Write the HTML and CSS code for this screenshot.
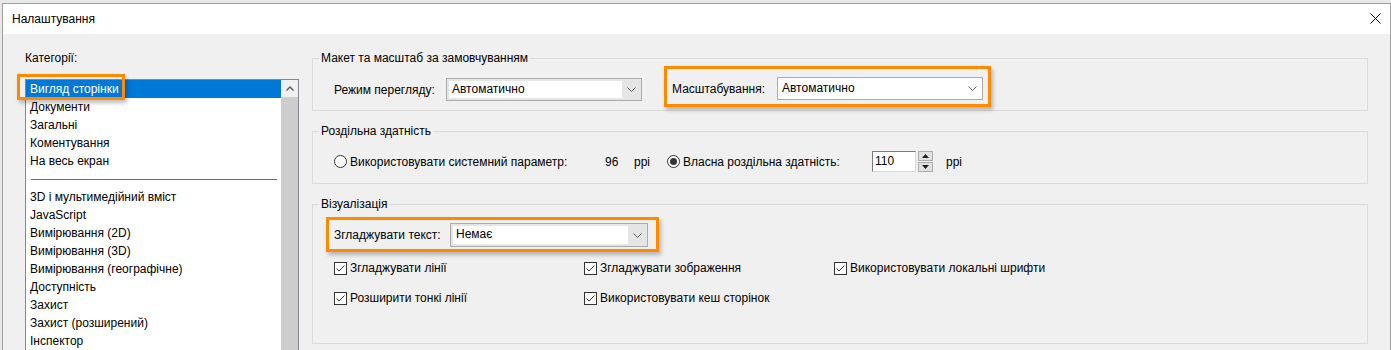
FILE: index.html
```html
<!DOCTYPE html>
<html lang="uk">
<head>
  <meta charset="UTF-8">
  <title>Налаштування</title>
  <link rel="stylesheet" href="styles.css">
</head>
<body>
  <div class="window">
    <div class="titlebar">
      <span class="title">Налаштування</span>
      <svg class="close" viewBox="0 0 11 11" fill="none" stroke="#000" stroke-width="1">
        <path d="M0.5 0.5L10.5 10.5M10.5 0.5L0.5 10.5"/>
      </svg>
    </div>

    <div class="dialog">
      <!-- Categories list -->
      <aside class="categories">
        <div class="cat-label">Категорії:</div>
        <div class="listbox">
          <ul class="list">
            <li class="selected">Вигляд сторінки</li>
            <li>Документи</li>
            <li>Загальні</li>
            <li>Коментування</li>
            <li>На весь екран</li>
            <li class="sep"></li>
            <li>3D і мультимедійний вміст</li>
            <li>JavaScript</li>
            <li>Вимірювання (2D)</li>
            <li>Вимірювання (3D)</li>
            <li>Вимірювання (географічне)</li>
            <li>Доступність</li>
            <li>Захист</li>
            <li>Захист (розширений)</li>
            <li>Інспектор</li>
          </ul>
          <div class="scrollbar">
            <div class="scroll-btn">
              <svg viewBox="0 0 8 5" fill="none" stroke="#606060" stroke-width="1.5">
                <path d="M0.5 4.5L4 1L7.5 4.5"/>
              </svg>
            </div>
            <div class="scroll-thumb"></div>
          </div>
          <div class="mark-item"></div>
        </div>
      </aside>

      <!-- Settings groups -->
      <main class="settings">
        <fieldset class="group group-layout">
          <legend>Макет та масштаб за замовчуванням</legend>
          <div class="row">
            <div class="field field-view">
              <span class="label label-view">Режим перегляду:</span>
              <div class="combo editable combo-view">
                <span class="value">Автоматично</span>
                <span class="arrow">
                  <svg viewBox="0 0 9 5" fill="none" stroke="#606060"><path d="M0.5 0.5L4.5 4.5L8.5 0.5"/></svg>
                </span>
              </div>
            </div>
            <div class="field callout callout-zoom">
              <span class="label label-zoom">Масштабування:</span>
              <div class="combo combo-zoom">
                <span class="value">Автоматично</span>
                <span class="arrow">
                  <svg viewBox="0 0 9 5" fill="none" stroke="#606060"><path d="M0.5 0.5L4.5 4.5L8.5 0.5"/></svg>
                </span>
              </div>
            </div>
          </div>
        </fieldset>

        <fieldset class="group group-res">
          <legend>Роздільна здатність</legend>
          <div class="row res-row">
            <label class="option opt-system">
              <span class="radio"></span>
              Використовувати системний параметр:
            </label>
            <span class="res-value">96</span>
            <span class="res-unit">ppi</span>
            <label class="option opt-custom">
              <span class="radio checked"></span>
              Власна роздільна здатність:
            </label>
            <div class="spin-input">110</div>
            <div class="spin">
              <span class="spin-btn">
                <svg viewBox="0 0 7 4"><path d="M0 4L3.5 0L7 4Z" fill="#202020"/></svg>
              </span>
              <span class="spin-btn">
                <svg viewBox="0 0 7 4"><path d="M0 0L3.5 4L7 0Z" fill="#202020"/></svg>
              </span>
            </div>
            <span class="res-unit unit-custom">ppi</span>
          </div>
        </fieldset>

        <fieldset class="group group-render">
          <legend>Візуалізація</legend>
          <div class="field callout callout-text">
            <span class="label label-text">Згладжувати текст:</span>
            <div class="combo editable combo-text">
              <span class="value">Немає</span>
              <span class="arrow">
                <svg viewBox="0 0 9 5" fill="none" stroke="#606060"><path d="M0.5 0.5L4.5 4.5L8.5 0.5"/></svg>
              </span>
            </div>
          </div>
          <div class="checks">
            <label class="option"><span class="check"><svg viewBox="0 0 11 11" fill="none" stroke="#333"><path d="M1.5 5.5L4 8L9.5 2.5"/></svg></span>Згладжувати лінії</label>
            <label class="option"><span class="check"><svg viewBox="0 0 11 11" fill="none" stroke="#333"><path d="M1.5 5.5L4 8L9.5 2.5"/></svg></span>Згладжувати зображення</label>
            <label class="option"><span class="check"><svg viewBox="0 0 11 11" fill="none" stroke="#333"><path d="M1.5 5.5L4 8L9.5 2.5"/></svg></span>Використовувати локальні шрифти</label>
            <label class="option"><span class="check"><svg viewBox="0 0 11 11" fill="none" stroke="#333"><path d="M1.5 5.5L4 8L9.5 2.5"/></svg></span>Розширити тонкі лінії</label>
            <label class="option"><span class="check"><svg viewBox="0 0 11 11" fill="none" stroke="#333"><path d="M1.5 5.5L4 8L9.5 2.5"/></svg></span>Використовувати кеш сторінок</label>
          </div>
        </fieldset>
      </main>
    </div>
  </div>
</body>
</html>
```

FILE: styles.css
```css
/* Reset */
* {
  margin: 0;
  padding: 0;
  box-sizing: border-box;
}

body {
  background-color: #e8e8e8;
  color: #000;
  font-family: "Liberation Sans", Arial, sans-serif;
  font-size: 12px;
  overflow: hidden;
}

.window {
  margin: 3px 0 0 2px;
  width: 1389px;
  height: 347px;
  border: 1px solid #a0a0a0;
  border-bottom: none;
  background-color: #f0f0f0;
  overflow: hidden;
}

/* Title bar */
.titlebar {
  height: 30px;
  background-color: #fff;
  display: flex;
  align-items: center;
  justify-content: space-between;
  padding: 0 9px;
}

.close {
  width: 11px;
  height: 11px;
  margin-top: -1px;
}

.dialog {
  display: grid;
  grid-template-columns: 274px 1056px;
  column-gap: 13px;
  padding-left: 22px;
}

/* Categories */
.cat-label {
  margin-top: 16px;
  line-height: 16px;
}

.listbox {
  position: relative;
  margin-top: 13px;
  height: 300px;
  border: 1px solid #828790;
  background-color: #fff;
  display: flex;
}

.list {
  flex: 1;
  list-style: none;
}

.list li {
  height: 18px;
  line-height: 18px;
  padding-left: 4px;
  white-space: nowrap;
}

.list li.selected {
  background-color: #0078d7;
  color: #fff;
}

.list li.sep {
  padding: 9px 4px 0 5px;
}

.list li.sep::before {
  content: "";
  display: block;
  height: 1px;
  background-color: #3d7ab8;
}

.scrollbar {
  width: 17px;
  display: flex;
  flex-direction: column;
}

.scroll-btn {
  height: 17px;
  background-color: #f0f0f0;
  display: flex;
  align-items: center;
  justify-content: center;
}

.scroll-btn svg {
  width: 8px;
  height: 5px;
}

.scroll-thumb {
  flex: 1;
  background-color: #cdcdcd;
}

/* Orange annotation around the selected category */
.mark-item {
  position: absolute;
  left: -6px;
  top: -3px;
  width: 102px;
  height: 20px;
  box-shadow: 0 0 0 3px #ff8a00, 2px 3px 4px 3px rgba(0, 0, 0, 0.25);
}

/* Groups */
.settings {
  padding-top: 17px;
}

.group {
  border: 1px solid #dcdcdc;
  padding: 0 0 0 6px;
}

.group legend {
  padding: 0 2px;
  line-height: 15px;
}

.group-layout {
  padding-top: 3px;
  padding-bottom: 6px;
}

.group-res {
  margin-top: 13px;
  padding-top: 12px;
  padding-bottom: 11px;
}

.group-render {
  margin-top: 13px;
  padding-top: 8px;
  padding-bottom: 36px;
}

.row {
  display: flex;
  align-items: center;
}

.field {
  display: flex;
  align-items: center;
}

.field-view {
  margin-left: 15px;
  padding: 9px 0 3px;
}

.label {
  white-space: nowrap;
}

.label-view {
  width: 112px;
}

.label-zoom {
  width: 105px;
}

.label-text {
  width: 116px;
}

.callout {
  box-shadow: 0 0 0 3px #ff8a00, 2px 3px 4px 3px rgba(0, 0, 0, 0.25);
}

.callout-zoom {
  margin-left: 25px;
  padding: 8px 5px 4px 5px;
}

.callout-text {
  margin-left: 10px;
  width: 327px;
  padding: 3px 8px 2px 5px;
}

/* Combo boxes */
.combo {
  display: flex;
  height: 23px;
  border: 1px solid #acacac;
  background-color: #fff;
}

.combo .value {
  flex: 1;
  padding-left: 4px;
  line-height: 21px;
}

.combo .arrow {
  width: 19px;
  display: flex;
  align-items: center;
  justify-content: center;
}

.combo .arrow svg {
  width: 9px;
  height: 5px;
}

.combo.editable {
  background-color: #e5e5e5;
  padding: 2px 0 2px 2px;
}

.combo.editable .value {
  background-color: #fff;
  padding-left: 3px;
  line-height: 17px;
}

.combo-view {
  width: 196px;
}

.combo-zoom {
  width: 206px;
}

.combo-text {
  width: 198px;
  height: 24px;
}

.combo-text .value {
  line-height: 18px;
}

/* Radio / checkbox */
.option {
  display: flex;
  align-items: center;
  gap: 3px;
  white-space: nowrap;
}

.radio {
  width: 13px;
  height: 13px;
  border: 1px solid #333;
  border-radius: 50%;
  background-color: #fff;
  display: flex;
  align-items: center;
  justify-content: center;
}

.radio.checked::after {
  content: "";
  width: 7px;
  height: 7px;
  border-radius: 50%;
  background-color: #333;
}

.check {
  width: 13px;
  height: 13px;
  border: 1px solid #333;
  background-color: #fff;
  display: flex;
}

.check svg {
  width: 11px;
  height: 11px;
}

/* Resolution row */
.res-row {
  height: 21px;
  margin-left: 15px;
}

.opt-system {
  width: 271px;
}

.res-value {
  width: 29px;
}

.res-unit {
  width: 33px;
}

.opt-custom {
  width: 205px;
}

.spin-input {
  width: 44px;
  height: 21px;
  line-height: 19px;
  padding-left: 2px;
  background-color: #fff;
  border: 1px solid;
  border-color: #7a7a7a #d9d9d9 #d9d9d9 #7a7a7a;
}

.spin {
  margin-left: 2px;
  width: 15px;
  height: 21px;
  display: flex;
  flex-direction: column;
  gap: 1px;
}

.spin-btn {
  flex: 1;
  background-color: #e1e1e1;
  border: 1px solid #adadad;
  display: flex;
  align-items: center;
  justify-content: center;
}

.spin-btn svg {
  width: 7px;
  height: 4px;
}

.unit-custom {
  margin-left: 13px;
}

/* Checkbox grid */
.checks {
  margin: 10px 0 0 15px;
  display: grid;
  grid-template-columns: 250px 250px auto;
  grid-auto-rows: 18px;
  row-gap: 12px;
}
```
